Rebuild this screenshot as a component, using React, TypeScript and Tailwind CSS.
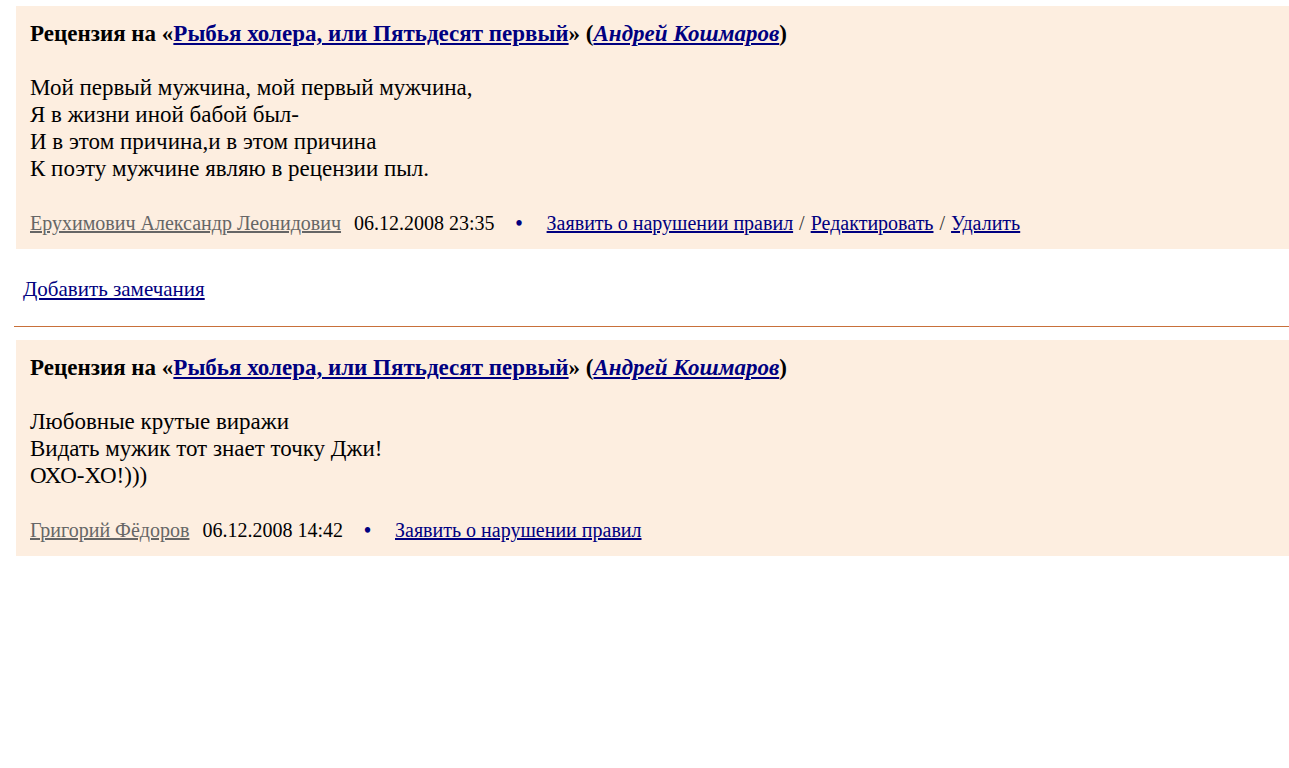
const serif = { fontFamily: '"Liberation Serif", "Times New Roman", serif' };

type Review = {
  lines: string[];
  author: string;
  date: string;
  own?: boolean;
};

const reviews: Review[] = [
  {
    lines: [
      "Мой первый мужчина, мой первый мужчина,",
      "Я в жизни иной бабой был-",
      "И в этом причина,и в этом причина",
      "К поэту мужчине являю в рецензии пыл.",
    ],
    author: "Ерухимович Александр Леонидович",
    date: "06.12.2008 23:35",
    own: true,
  },
  {
    lines: ["Любовные крутые виражи", "Видать мужик тот знает точку Джи!", "ОХО-ХО!)))"],
    author: "Григорий Фёдоров",
    date: "06.12.2008 14:42",
  },
];

function ReviewCard({ r }: { r: Review }) {
  return (
    <div className="ml-[16px] bg-[#fdeee0] pl-[14px] pr-4 pt-[14px] pb-[13px] text-black">
      <div className="text-[23px] font-bold leading-[27px]">
        Рецензия на «
        <a href="#" className="text-[#000080] underline">
          Рыбья холера, или Пятьдесят первый
        </a>
        » (
        <a href="#" className="italic text-[#000080] underline">
          Андрей Кошмаров
        </a>
        )
      </div>
      <div className="mt-[27px] text-[23px] leading-[27px]">
        {r.lines.map((l, i) => (
          <div key={i}>{l}</div>
        ))}
      </div>
      <div className="mt-[28px] flex items-center text-[20px] leading-[26px]">
        <a href="#" className="text-[#666666] underline">
          {r.author}
        </a>
        <span className="ml-[13px]">{r.date}</span>
        <span className="ml-[21px] font-bold text-[#000080]">•</span>
        <a href="#" className="ml-[24px] text-[#000080] underline">
          Заявить о нарушении правил
        </a>
        {r.own && (
          <>
            <span className="mx-[6px] text-[#333]">/</span>
            <a href="#" className="text-[#000080] underline">
              Редактировать
            </a>
            <span className="mx-[6px] text-[#333]">/</span>
            <a href="#" className="text-[#000080] underline">
              Удалить
            </a>
          </>
        )}
      </div>
    </div>
  );
}

export default function App() {
  return (
    <div className="min-h-[768px] bg-white pt-[6px]" style={serif}>
      <ReviewCard r={reviews[0]} />
      <div className="ml-[23px] mt-[28px] text-[21px] leading-[24px]">
        <a href="#" className="text-[#000080] underline">
          Добавить замечания
        </a>
      </div>
      <div className="ml-[14px] mt-[25px] border-t border-[#c8703a]" />
      <div className="mt-[13px]">
        <ReviewCard r={reviews[1]} />
      </div>
    </div>
  );
}
